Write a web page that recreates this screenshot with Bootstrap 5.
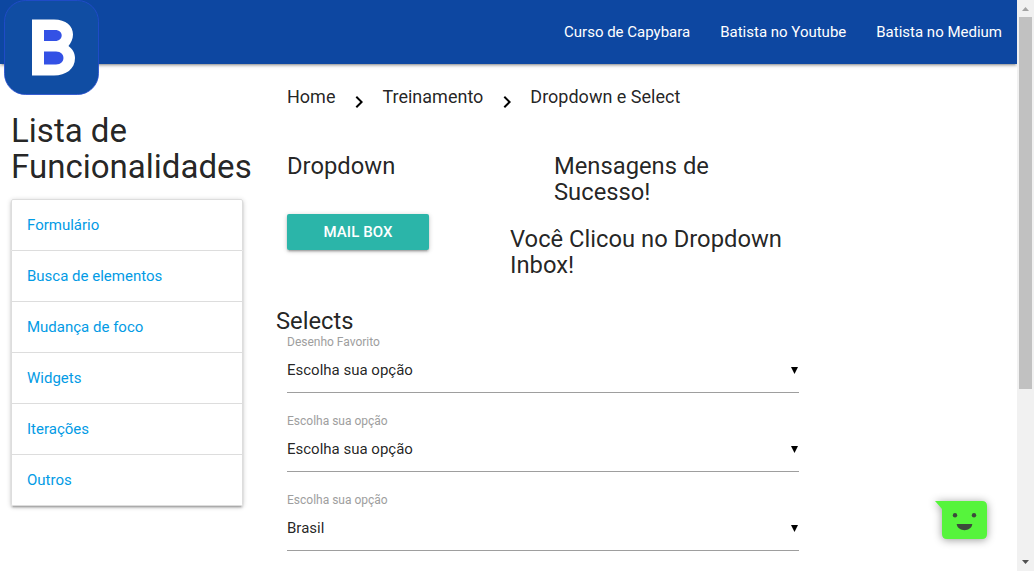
<!DOCTYPE html>
<html lang="pt-BR">
<head>
<meta charset="utf-8">
<meta name="viewport" content="width=device-width, initial-scale=1">
<title>Dropdown e Select</title>
<link href="https://cdn.jsdelivr.net/npm/bootstrap@5.3.0/dist/css/bootstrap.min.css" rel="stylesheet">
<style>
:root { font-size: 14.5px; }
body { font-family: Roboto, sans-serif; color: rgba(0,0,0,.87); line-height: 1.5; }
.page-view { height: 571px; }
.top-bar { height: 64px; background: #0d47a1; box-shadow: 0 2px 2px 0 rgba(0,0,0,.14), 0 3px 1px -2px rgba(0,0,0,.12), 0 1px 5px 0 rgba(0,0,0,.2); }
.top-bar .nav-link { color: #fff; font-size: 15px; line-height: 64px; padding: 0 15px; }
.brand-logo { left: 4px; top: 0; line-height: 0; }
h4, h5 { font-weight: 400; line-height: 1.1; margin: 0; }
h4 { font-size: 33.06px; margin-bottom: 13px; white-space: nowrap; }
h5 { font-size: 23.78px; }
.side-col { width: 232px; margin-left: 11px; padding-top: 49px; }
.main-col { width: 523px; margin-left: 33px; padding-top: 20px; }
.inset { padding-left: 11px; }
.side-menu { --bs-list-group-border-color: #ddd; --bs-list-group-border-radius: 2px; box-shadow: 0 2px 2px 0 rgba(0,0,0,.14), 0 3px 1px -2px rgba(0,0,0,.12), 0 1px 5px 0 rgba(0,0,0,.2); }
.side-menu .list-group-item { color: #039be5; height: 51px; padding: 0 15px; line-height: 51px; font-size: 15px; }
.side-menu .list-group-item:first-child { height: 52px; }
.crumbs { font-size: 18px; line-height: 26px; height: 26px; }
.crumbs svg { margin: 6px 11px 0 12px; }
.demo-row { height: 155px; margin-top: 43px; }
.message-col { width: 289px; margin-left: 81px; }
.mail-btn { width: 142px; height: 36px; margin-top: 35px; background: #2bb5a9; color: #fff; border: 0; border-radius: 2px; font-size: 15px; font-weight: 500; padding: 0; letter-spacing: .1px; box-shadow: 0 2px 2px 0 rgba(0,0,0,.14), 0 3px 1px -2px rgba(0,0,0,.12), 0 1px 5px 0 rgba(0,0,0,.2); }
.select-field { height: 79px; }
.select-field label { font-size: 12px; line-height: 16px; height: 16px; color: #9e9e9e; }
.select-field .choice { height: 43px; line-height: 40px; font-size: 15px; border-bottom: 1px solid #9e9e9e; margin: 0; }
.scroll-track { width: 17px; background: #f1f1f1; }
.scroll-thumb { width: 13px; height: 372px; background: #c1c1c1; }
.chat-bubble { left: 920px; top: 485px; }
</style>
</head>
<body>
<div class="page-view d-flex overflow-hidden position-relative">
  <div class="flex-grow-1 overflow-hidden">
    <nav class="top-bar d-flex justify-content-end position-relative">
      <a class="brand-logo position-absolute" href="#" aria-label="Batista">
        <svg width="95" height="95" viewBox="0 0 95 95">
          <rect x=".5" y=".5" width="94" height="94" rx="21" fill="#104da3" stroke="#244bd0" stroke-width=".8"/>
          <path d="M28 19.5H50C62 19.5 69 26 69 34.5C69 39 67 43 64.5 46C68.500 49 71 53 71 58C71 69 62 75.500 50 75.500H28Z" fill="#fff"/>
          <path d="M40 30H51C60 30 60 41 51 41H40ZM40 51.500H52C62 51.500 62 64.500 52 64.500H40Z" fill="#3351e5"/>
        </svg>
      </a>
      <div class="nav flex-nowrap">
        <a class="nav-link" href="#">Curso de Capybara</a>
        <a class="nav-link" href="#">Batista no Youtube</a>
        <a class="nav-link" href="#">Batista no Medium</a>
      </div>
    </nav>
    <div class="d-flex">
      <aside class="side-col flex-shrink-0">
        <h4>Lista de<br>Funcionalidades</h4>
        <div class="list-group side-menu">
          <a class="list-group-item" href="#">Formulário</a>
          <a class="list-group-item" href="#">Busca de elementos</a>
          <a class="list-group-item" href="#">Mudança de foco</a>
          <a class="list-group-item" href="#">Widgets</a>
          <a class="list-group-item" href="#">Iterações</a>
          <a class="list-group-item" href="#">Outros</a>
        </div>
      </aside>
      <main class="main-col flex-shrink-0">
        <div class="crumbs inset d-flex">
          <span>Home</span>
          <svg width="24" height="24" viewBox="0 0 24 24"><path d="M10 6L8.590 7.410 13.170 12l-4.580 4.590L10 18l6-6z"/></svg>
          <span>Treinamento</span>
          <svg width="24" height="24" viewBox="0 0 24 24"><path d="M10 6L8.590 7.410 13.170 12l-4.580 4.590L10 18l6-6z"/></svg>
          <span>Dropdown e Select</span>
        </div>
        <div class="demo-row inset d-flex">
          <div>
            <h5>Dropdown</h5>
            <button class="btn mail-btn" type="button">MAIL BOX</button>
          </div>
          <div class="message-col flex-shrink-0">
            <h5 class="success-title">Mensagens de<br>Sucesso!</h5>
            <h5 class="success-text">Você Clicou no Dropdown<br>Inbox!</h5>
          </div>
        </div>
        <h5>Selects</h5>
        <div class="inset">
          <div class="select-field">
            <label class="d-block">Desenho Favorito</label>
            <div class="choice d-flex justify-content-between"><span>Escolha sua opção</span><svg class="caret" width="9" height="40" viewBox="0 0 9 40"><path d="M1 17H8L4.500 24Z"/></svg></div>
          </div>
          <div class="select-field">
            <label class="d-block">Escolha sua opção</label>
            <div class="choice d-flex justify-content-between"><span>Escolha sua opção</span><svg class="caret" width="9" height="40" viewBox="0 0 9 40"><path d="M1 17H8L4.500 24Z"/></svg></div>
          </div>
          <div class="select-field">
            <label class="d-block">Escolha sua opção</label>
            <div class="choice d-flex justify-content-between"><span>Brasil</span><svg class="caret" width="9" height="40" viewBox="0 0 9 40"><path d="M1 17H8L4.500 24Z"/></svg></div>
          </div>
        </div>
      </main>
    </div>
  </div>
  <div class="scroll-track flex-shrink-0 d-flex flex-column align-items-center">
    <svg width="17" height="17" viewBox="0 0 17 17"><path d="M5 11H12L8.500 7Z" fill="#a3a3a3"/></svg>
    <div class="scroll-thumb"></div>
    <svg class="mt-auto" width="17" height="17" viewBox="0 0 17 17"><path d="M5 6H12L8.500 10Z" fill="#505050"/></svg>
  </div>
  <svg class="chat-bubble position-absolute" width="85" height="75" viewBox="0 0 85 75">
    <path d="M15 16H62Q67 16 67 21V49Q67 54 62 54H27Q22 54 22 49V24Z" fill="#56f43c" style="filter:drop-shadow(0 1px 4px rgba(0,0,0,.4))"/>
    <circle cx="35" cy="30.300" r="2.200" fill="#3c4a3b"/><circle cx="54" cy="30.300" r="2.200" fill="#3c4a3b"/>
    <path d="M36.700 39H52.300C51.500 47.200 37.500 47.200 36.700 39Z" fill="#3c4a3b"/>
  </svg>
</div>
<style>
.success-title { padding-left: 44px; }
.success-text { margin-top: 21px; }
</style>
<script src="https://cdn.jsdelivr.net/npm/bootstrap@5.3.0/dist/js/bootstrap.bundle.min.js"></script>
</body>
</html>
